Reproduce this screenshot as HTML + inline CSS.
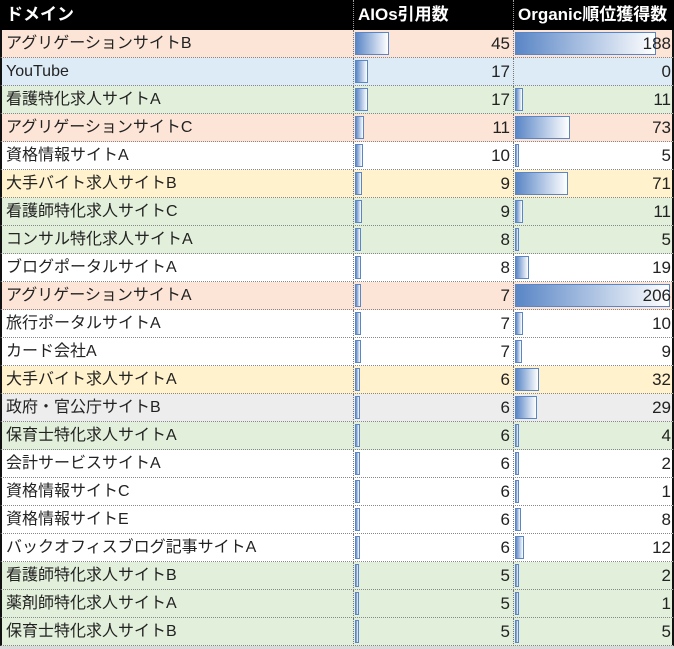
<!DOCTYPE html><html><head><meta charset="utf-8"><style>
*{margin:0;padding:0;box-sizing:border-box}
body{width:674px;height:649px;background:#d9d9d9;font-family:"Liberation Sans","Noto Sans CJK JP",sans-serif;font-size:16px;color:#222;overflow:hidden;position:relative}
.r{position:absolute;left:0;width:674px;height:28px;border-bottom:1px dotted #888;border-left:2px solid #111;border-right:2px solid #111}
.c{position:absolute;top:0;height:28px;line-height:27px}
.c1{left:4px;width:348px;white-space:nowrap}
.c2{left:351px;width:160px;border-left:1px dotted #777;text-align:right;padding-right:3px;font-size:17px}
.c3{left:511px;width:159px;border-left:1px dotted #777;text-align:right;padding-right:1px;font-size:17px}
.b{position:absolute;left:1px;top:2px;height:23px;background:linear-gradient(90deg,#5a86c6,#fff);border:1px solid #5a86c6}
.t{position:relative}
.h{top:0;height:30px;background:#000;color:#fff;font-weight:bold;border:none;font-size:17px}
.h .c{height:30px;line-height:30px}
.h .c2,.h .c3{text-align:left;padding-left:4px;border-left:1px dotted #999}
</style></head><body>
<div class="r h"><div class="c c1" style="left:6px">ドメイン</div><div class="c c2" style="left:353px">AIOs引用数</div><div class="c c3" style="left:513px">Organic順位獲得数</div></div>
<div id="rows"></div>
<script>
var d=[["アグリゲーションサイトB",45,188,"#fce4d6"],["YouTube",17,0,"#ddebf7"],["看護特化求人サイトA",17,11,"#e2efda"],["アグリゲーションサイトC",11,73,"#fce4d6"],["資格情報サイトA",10,5,"#fff"],["大手バイト求人サイトB",9,71,"#fff2cc"],["看護師特化求人サイトC",9,11,"#e2efda"],["コンサル特化求人サイトA",8,5,"#e2efda"],["ブログポータルサイトA",8,19,"#fff"],["アグリゲーションサイトA",7,206,"#fce4d6"],["旅行ポータルサイトA",7,10,"#fff"],["カード会社A",7,9,"#fff"],["大手バイト求人サイトA",6,32,"#fff2cc"],["政府・官公庁サイトB",6,29,"#ededed"],["保育士特化求人サイトA",6,4,"#e2efda"],["会計サービスサイトA",6,2,"#fff"],["資格情報サイトC",6,1,"#fff"],["資格情報サイトE",6,8,"#fff"],["バックオフィスブログ記事サイトA",6,12,"#fff"],["看護師特化求人サイトB",5,2,"#e2efda"],["薬剤師特化求人サイトA",5,1,"#e2efda"],["保育士特化求人サイトB",5,5,"#e2efda"]];
var h="";d.forEach(function(x,i){var w2=Math.round(4+(x[1]-5)*30/40),w3=x[2]==0?0:Math.max(4,Math.round(x[2]*0.75));
h+='<div class="r" style="top:'+(30+i*28)+'px;background:'+x[3]+'"><div class="c c1">'+x[0]+'</div><div class="c c2"><div class="b" style="width:'+w2+'px"></div><span class="t">'+x[1]+'</span></div><div class="c c3">'+(w3?'<div class="b" style="width:'+w3+'px"></div>':'')+'<span class="t">'+x[2]+'</span></div></div>';});
document.getElementById("rows").innerHTML=h;
</script>
</body></html>
